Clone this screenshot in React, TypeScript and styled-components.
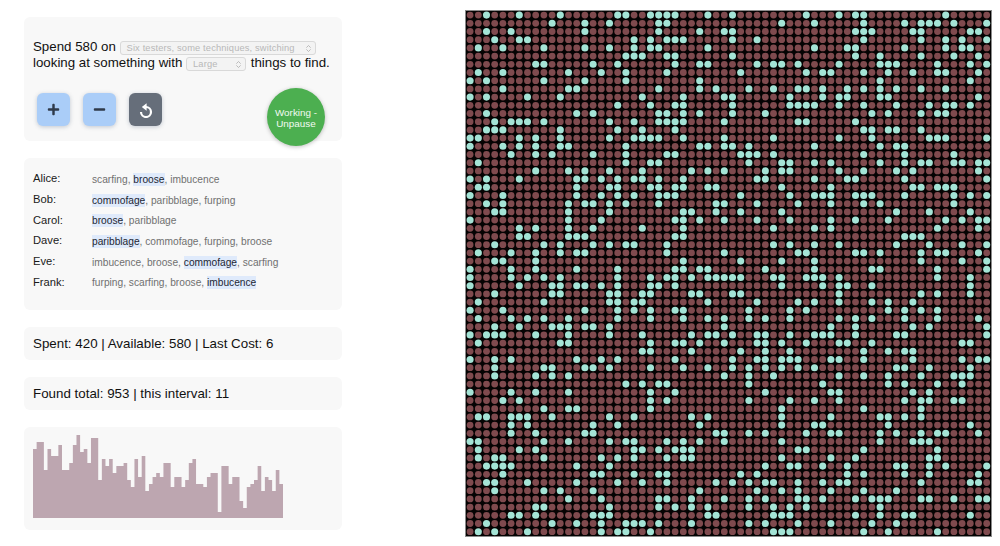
import { Fragment } from 'react';
import styled, { createGlobalStyle } from 'styled-components';
import { FaMinus, FaPlus } from 'react-icons/fa';
import { ChevronsUpDown } from 'lucide-react';

const GlobalStyle = createGlobalStyle`
  html, body {
    margin: 0;
    background: #fff;
    font-family: "Liberation Sans", Arial, sans-serif;
    color: #111;
  }
`;

const Page = styled.div`
  display: flex;
  align-items: flex-start;
  width: 1000px;
  height: 546px;
  overflow: hidden;
  box-sizing: border-box;
  padding: 11px 0 0 24px;
`;

const Controls = styled.div`
  display: flex;
  flex-direction: column;
  gap: 17px;
  width: 318px;
  padding-top: 6px;
`;

const Card = styled.section`
  background: #f8f8f8;
  border-radius: 6px;
  box-sizing: border-box;
  padding: 0 9px;
`;

const Intro = styled(Card)`
  height: 124px;
  padding-top: 22px;
`;

const Sentence = styled.div`
  font-size: 13.3px;
  line-height: 16px;
  white-space: nowrap;
`;

const Select = styled.span<{ $width: number }>`
  display: inline-flex;
  align-items: center;
  justify-content: space-between;
  box-sizing: border-box;
  width: ${p => p.$width}px;
  height: 14px;
  margin: 2px 1px 0 0;
  padding: 0 2px 0 6px;
  vertical-align: top;
  background: #f3f3f3;
  border: 1px solid #d9d9d9;
  border-radius: 3px;
  color: #b8b8b8;
  font-size: 9.3px;
  letter-spacing: 0.15px;
  line-height: 12px;

  svg {
    color: #a8a8a8;
  }
`;

const ButtonRow = styled.div`
  display: flex;
  align-items: flex-start;
  gap: 13px;
  margin-top: 22px;
  padding-left: 4px;
`;

const IconButton = styled.button<{ $dark?: boolean }>`
  display: flex;
  align-items: center;
  justify-content: center;
  width: 33px;
  height: 33px;
  padding: 0;
  background: ${p => (p.$dark ? '#666e7a' : '#aacdf8')};
  border: 0;
  border-radius: 6px;
  box-shadow: 0 1px 4px rgba(70, 90, 120, 0.3);
  color: ${p => (p.$dark ? '#fff' : '#2f3a4a')};
`;

const PauseButton = styled.button`
  width: 58px;
  height: 58px;
  margin: -5px 8px -20px auto;
  padding: 2px 2px 0;
  background: #4caf50;
  border: 0;
  border-radius: 50%;
  box-shadow: 0 1px 4px rgba(0, 0, 0, 0.25);
  color: #f2faf2;
  font-family: inherit;
  font-size: 9.9px;
  line-height: 11px;
`;

const Testers = styled(Card)`
  display: grid;
  grid-template-columns: 59px 1fr;
  grid-auto-rows: 20.7px;
  align-items: center;
  height: 152px;
  padding-top: 10px;
`;

const Name = styled.div`
  font-size: 11.2px;
  color: #1a1a1a;
`;

const Techniques = styled.div`
  position: relative;
  top: 1px;
  font-size: 10.2px;
  color: #707070;
`;

const Technique = styled.span<{ $active: boolean }>`
  ${p => p.$active && 'background: #dfeafb; color: #1d2733; padding: 1px 0;'}
`;

const Stat = styled(Card)`
  height: 33px;
  font-size: 13.35px;
  line-height: 33px;
`;

const ChartCard = styled(Card)`
  height: 103px;
  padding-top: 7px;
`;

const Chart = styled.svg`
  display: block;
`;

const Board = styled.svg`
  display: block;
  flex: none;
  margin-left: 124px;
  background: #050303;
  outline: 1px solid #8a8a8a;
`;

const testers: [string, string[], number][] = [
  ['Alice:', ['scarfing', 'broose', 'imbucence'], 1],
  ['Bob:', ['commofage', 'paribblage', 'furping'], 0],
  ['Carol:', ['broose', 'paribblage'], 0],
  ['Dave:', ['paribblage', 'commofage', 'furping', 'broose'], 0],
  ['Eve:', ['imbucence', 'broose', 'commofage', 'scarfing'], 2],
  ['Frank:', ['furping', 'scarfing', 'broose', 'imbucence'], 3],
];

// bar tops as read off the reference, height is 97 - top
const barTops = [28, 21, 21, 49, 28, 35, 35, 24, 49, 49, 42, 24, 14, 31, 28, 42, 17, 17, 59, 38, 45, 38, 52, 45, 45, 42, 59, 66, 38, 56, 35, 70, 63, 56, 52, 56, 42, 42, 66, 56, 56, 66, 59, 42, 38, 63, 63, 66, 56, 52, 52, 91, 45, 45, 63, 56, 56, 80, 87, 66, 63, 59, 45, 70, 56, 59, 70, 49, 63];

const barWidth = 250 / barTops.length;
const barPath =
  'M0 84' +
  barTops.map((top, i) => `L${i * barWidth} ${top - 13}L${(i + 1) * barWidth} ${top - 13}`).join('') +
  'L250 84Z';

const found: number[][] = [
  [2, 6, 11, 18, 19, 22, 23, 24, 25, 29, 32, 41, 45, 47, 48, 58],
  [10, 14, 17, 23, 24, 38, 42, 48, 53, 55, 56, 57, 59, 63],
  [2, 5, 14, 23, 28, 31, 32, 47, 48, 49, 54, 55, 61, 62],
  [3, 6, 7, 20, 22, 24, 25, 26, 32, 35, 48, 55, 58, 60, 63],
  [1, 4, 9, 14, 17, 20, 22, 23, 29, 42, 46, 47, 53, 58, 60, 61],
  [19, 20, 21, 24, 25, 32, 47, 50, 55, 59, 62],
  [8, 9, 15, 18, 25, 28, 29, 35, 37, 38, 40, 45, 50, 51, 52, 57, 61, 63],
  [1, 4, 12, 16, 19, 24, 33, 41, 43, 44, 48, 51, 54, 57, 58, 62],
  [0, 2, 9, 14, 19, 28, 50, 61],
  [4, 12, 13, 23, 28, 30, 34, 37, 40, 41, 43, 46, 48, 50, 52, 55, 58],
  [0, 2, 7, 11, 21, 26, 31, 32, 39, 43, 45, 46, 50, 51, 62],
  [18, 22, 25, 26, 32, 39, 40, 41, 42, 45, 48, 52, 56, 58, 59, 61],
  [2, 13, 15, 23, 24, 26, 28, 32, 36, 49, 51, 55, 57, 58],
  [3, 5, 6, 7, 9, 17, 20, 23, 24, 25, 26, 31, 40, 41, 47],
  [2, 3, 4, 11, 18, 21, 25, 48, 49, 51, 52, 55],
  [0, 1, 6, 8, 11, 17, 20, 21, 22, 23, 26, 31, 37, 45, 49, 56, 57, 58, 63],
  [0, 4, 6, 8, 11, 12, 19, 28, 29, 31, 32, 34, 42, 50, 52, 53],
  [5, 8, 10, 15, 19, 24, 25, 33, 34, 35, 37, 48, 53, 59],
  [1, 19, 22, 23, 34, 38, 39, 42, 44, 50, 53, 55, 56, 59, 60, 62, 63],
  [8, 12, 14, 17, 21, 27, 29, 31, 36, 38, 39, 45, 48, 52, 54, 62],
  [0, 2, 6, 13, 14, 16, 18, 20, 21, 23, 26, 35, 36, 42, 46, 47, 53, 63],
  [1, 2, 13, 17, 18, 22, 23, 25, 26, 29, 30, 38, 44, 54, 55, 57, 58, 59],
  [0, 4, 13, 16, 18, 20, 23, 24, 25, 33, 39, 42, 43, 44, 47, 48, 49, 53, 59, 61, 63],
  [2, 4, 12, 14, 15, 17, 19, 23, 30, 31, 35, 40, 44, 48, 50, 59],
  [3, 4, 12, 17, 26, 27, 30, 33, 38, 52, 56, 61],
  [0, 12, 16, 25, 26, 28, 31, 35, 39, 44, 47, 51, 58, 60, 62, 63],
  [6, 8, 12, 15, 21, 26, 37, 42, 44, 57, 62],
  [6, 7, 12, 13, 14, 25, 26, 53, 54, 55],
  [3, 9, 11, 15, 17, 19, 20, 24, 37, 39, 42, 45, 52, 56, 60, 63],
  [1, 5, 8, 11, 13, 14, 24, 31, 40, 41, 47, 48, 50, 55, 57, 58, 62],
  [3, 4, 8, 26, 33, 38, 42, 55, 60, 63],
  [0, 5, 8, 13, 18, 25, 26, 28, 29, 36, 42, 49, 50, 57, 63],
  [0, 5, 7, 9, 11, 18, 22, 24, 25, 27, 29, 30, 31, 32, 33, 37, 38, 41, 42, 43, 45, 57, 61],
  [0, 6, 10, 11, 13, 14, 16, 18, 22, 23, 25, 38, 43, 45, 46, 49, 61],
  [3, 10, 11, 17, 18, 21, 22, 27, 28, 32, 33, 45, 55, 57, 61],
  [1, 9, 17, 18, 20, 21, 29, 35, 40, 42, 45, 49, 51, 54],
  [0, 4, 14, 18, 20, 22, 25, 26, 34, 39, 41, 51, 53, 55, 57],
  [1, 5, 7, 9, 12, 18, 22, 26, 29, 31, 34, 36, 39, 45, 47, 49, 53, 57, 62],
  [3, 6, 10, 11, 12, 14, 15, 17, 31, 44, 47, 54, 56, 63],
  [0, 2, 3, 4, 8, 12, 17, 21, 27, 29, 30, 32, 35, 36, 39, 42, 43, 44, 47, 52, 53, 63],
  [1, 11, 12, 22, 25, 26, 28, 31, 35, 36, 38, 41, 45, 46, 49, 60, 61],
  [21, 22, 27, 33, 36, 39, 48, 51, 53, 54],
  [0, 3, 5, 13, 16, 18, 25, 32, 35, 36, 38, 39, 40, 44, 45, 48, 54, 60, 62, 63],
  [3, 9, 10, 14, 15, 17, 22, 26, 29, 32, 34, 36, 38, 40, 42, 52, 53, 56, 61],
  [3, 8, 10, 12, 31, 34, 37, 45, 48, 51, 55, 59, 60, 61],
  [19, 21, 23, 24, 34, 43, 51, 53, 57, 60],
  [0, 5, 8, 12, 22, 25, 36, 44, 45, 54, 56],
  [4, 6, 22, 24, 34, 39, 42, 45, 53, 55, 56, 59, 60],
  [9, 12, 13, 22, 38, 48, 55],
  [1, 2, 5, 6, 7, 10, 17, 20, 27, 29, 38, 44, 50, 51, 53, 55],
  [5, 7, 15, 18, 28, 38, 42, 43, 51, 61],
  [5, 8, 14, 15, 30, 31, 34, 36, 41, 44, 45, 50, 52, 55, 57, 58, 62],
  [0, 1, 9, 12, 17, 19, 20, 24, 26, 28, 31, 38, 50, 54, 55, 56],
  [1, 6, 8, 20, 21, 23, 25, 26, 27, 40, 41, 48, 57],
  [1, 3, 4, 9, 16, 18, 20, 24, 26, 27, 38, 44, 47, 56, 57],
  [2, 3, 4, 5, 13, 17, 36, 39, 40, 43, 46, 52, 53, 56, 58, 63],
  [4, 15, 16, 20, 23, 24, 33, 35, 46, 48, 53, 56, 62],
  [2, 3, 7, 13, 18, 21, 24, 30, 32, 34, 36, 37, 40, 43, 45, 46, 55, 61, 62],
  [3, 9, 11, 15, 28, 35, 38, 40, 44, 48, 52],
  [12, 16, 23, 24, 27, 31, 34, 36, 40, 41, 43, 47, 49, 50, 51, 55, 56, 59, 62, 63],
  [8, 9, 17, 23, 25, 27, 29, 34, 37, 39, 41, 50],
  [5, 6, 8, 15, 16, 17, 29, 30, 37, 38, 39, 47, 50, 53, 54, 61],
  [2, 10, 13, 16, 19, 20, 21, 23, 27, 34, 36, 40, 44, 49, 52],
  [1, 3, 7, 16, 18, 19, 22, 37, 38, 39, 48, 51, 57],
];

const ResetIcon = () => (
  <svg width="14" height="16" viewBox="0 0 14 16">
    <path d="M7 5a5 5 0 1 1-5 5" fill="none" stroke="currentColor" strokeWidth="2.2" />
    <path d="M7.6 1.2v7.6L2.8 5z" fill="currentColor" />
  </svg>
);

const App = () => (
  <Page>
    <GlobalStyle />
    <Controls>
      <Intro>
        <Sentence>
          Spend 580 on{' '}
          <Select $width={196}>
            Six testers, some techniques, switching
            <ChevronsUpDown size={9} strokeWidth={2} />
          </Select>
          <br />
          looking at something with{' '}
          <Select $width={60}>
            Large
            <ChevronsUpDown size={9} strokeWidth={2} />
          </Select>{' '}
          things to find.
        </Sentence>
        <ButtonRow>
          <IconButton><FaPlus size={13} /></IconButton>
          <IconButton><FaMinus size={13} /></IconButton>
          <IconButton $dark><ResetIcon /></IconButton>
          <PauseButton>Working - Unpause</PauseButton>
        </ButtonRow>
      </Intro>

      <Testers>
        {testers.map(([name, items, active]) => (
          <Fragment key={name}>
            <Name>{name}</Name>
            <Techniques>
              {items.map((item, i) => (
                <span key={item}>
                  {i > 0 && ', '}
                  <Technique $active={i === active}>{item}</Technique>
                </span>
              ))}
            </Techniques>
          </Fragment>
        ))}
      </Testers>

      <Stat>Spent: 420 | Available: 580 | Last Cost: 6</Stat>
      <Stat>Found total: 953 | this interval: 11</Stat>

      <ChartCard>
        <Chart width={250} height={84} viewBox="0 0 250 84">
          <path d={barPath} fill="#bda6b0" />
        </Chart>
      </ChartCard>
    </Controls>

    <Board width={525} height={525} viewBox="0 0 525 525">
      {found.map((row, y) =>
        Array.from({ length: 64 }, (_, x) => (
          <circle
            key={`${y}-${x}`}
            cx={x * 8.2 + 4.1}
            cy={y * 8.2 + 4.1}
            r={row.includes(x) ? 3.55 : 3.4}
            fill={row.includes(x) ? '#a4e4d6' : '#7f4a4e'}
          />
        )),
      )}
    </Board>
  </Page>
);

export default App;
